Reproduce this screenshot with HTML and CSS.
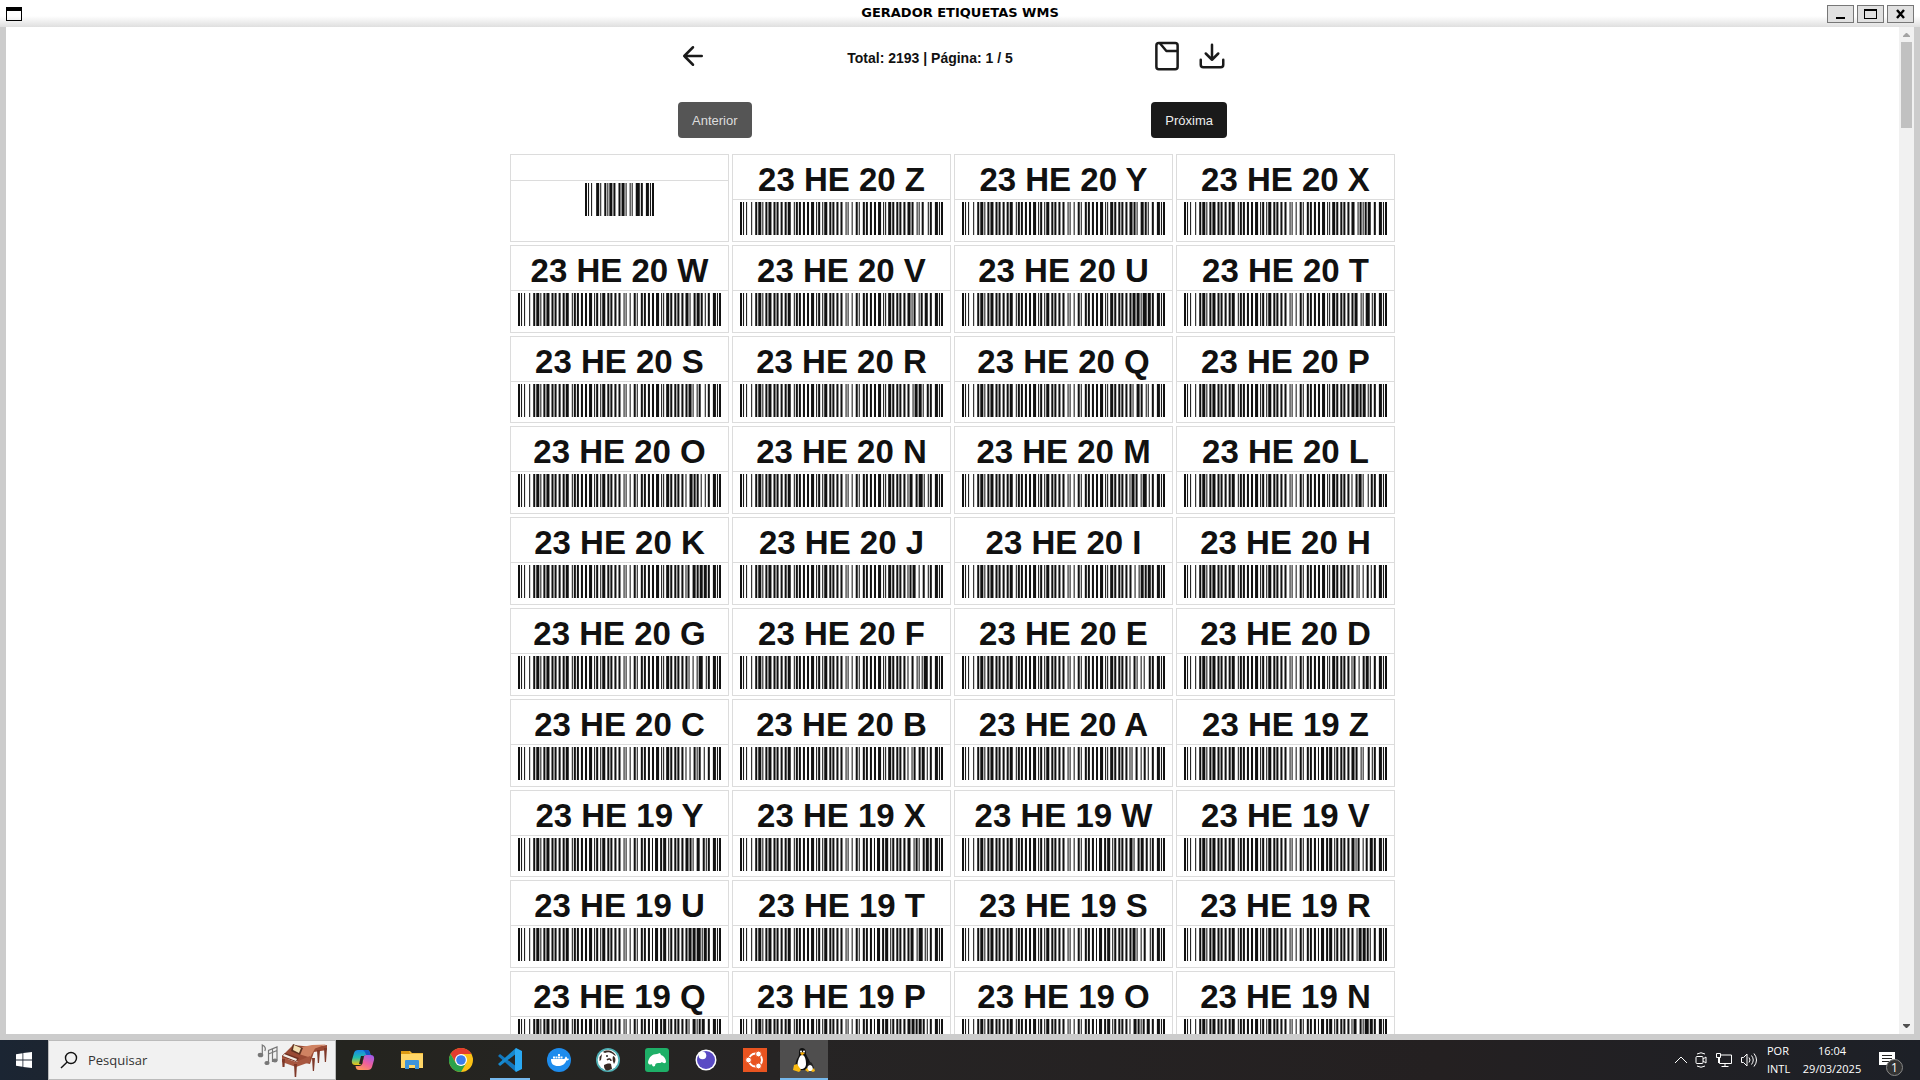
FILE: index.html
```html
<!DOCTYPE html>
<html lang="pt-BR">
<head>
<meta charset="utf-8">
<title>GERADOR ETIQUETAS WMS</title>
<link rel="stylesheet" href="styles.css">
</head>
<body>
<header class="titlebar">
  <svg class="app-icon" width="16" height="14" viewBox="0 0 16 14"><path d="M0 0h16v14H0zM1 4v9h14V4z" fill="#000" fill-rule="evenodd"/></svg>
  <h1 class="window-title">GERADOR ETIQUETAS WMS</h1>
  <div class="window-controls">
    <button class="win-btn" aria-label="Minimizar"><svg width="13" height="10" viewBox="0 0 13 10"><path d="M2 8h9v2H2z"/></svg></button>
    <button class="win-btn" aria-label="Maximizar"><svg width="13" height="10" viewBox="0 0 13 10"><path d="M0 0h13v10H0zM1 2v7h11V2z" fill-rule="evenodd"/></svg></button>
    <button class="win-btn" aria-label="Fechar"><svg width="13" height="10" viewBox="0 0 13 10"><path d="M3 1l7 8M10 1L3 9" stroke="#000" stroke-width="2.4"/></svg></button>
  </div>
</header>

<div class="window-body">
  <main class="viewport">
    <div class="toolbar">
      <button class="icon-btn" aria-label="Voltar"><svg class="line-icon" viewBox="0 0 24 24"><path d="M19 12H5M12 19l-7-7 7-7"/></svg></button>
      <p class="summary">Total: 2193 | Página: 1 / 5</p>
      <div class="toolbar-actions">
        <button class="icon-btn" aria-label="Documento"><svg class="line-icon" viewBox="0 0 24 24"><rect x="3.500" y="1.500" width="17" height="21" rx="2"/><path d="M6.500 2l5 6H20"/></svg></button>
        <button class="icon-btn" aria-label="Baixar"><svg class="line-icon" viewBox="0 0 24 24"><path d="M21 15v4a2 2 0 0 1-2 2H5a2 2 0 0 1-2-2v-4M7 10l5 5 5-5M12 15V3"/></svg></button>
      </div>
    </div>
    <nav class="pager" aria-label="Paginação">
      <button class="pager-btn pager-btn-off">Anterior</button>
      <button class="pager-btn">Próxima</button>
    </nav>
    <section class="labels" id="labels"></section>
  </main>
  <div class="scrollbar">
    <svg class="scroll-arrow" width="7" height="4" viewBox="0 0 7 4"><path d="M3 0h1l3 3v1H0V3z" fill="#a3a3a3"/></svg>
    <div class="scroll-track"><div class="scroll-thumb"></div></div>
    <svg class="scroll-arrow" width="7" height="4" viewBox="0 0 7 4"><path d="M0 0h7v1L4 4H3L0 1z" fill="#505050"/></svg>
  </div>
</div>

<footer class="taskbar">
  <button class="start" aria-label="Iniciar"><svg width="16" height="16" viewBox="0 0 16 16"><path d="M0 2.200L6.500 1.300V7.600H0zM7.300 1.100L16 0V7.600H7.300zM0 8.400H6.500V14.700L0 13.800zM7.300 8.400H16V16L7.300 14.900z" fill="#fff"/></svg></button>
  <div class="search">
    <svg width="18" height="18" viewBox="0 0 18 18" fill="none" stroke="#111" stroke-width="1.400"><circle cx="11" cy="7" r="5.500"/><path d="M7.200 11L1 17"/></svg>
    <input class="search-input" type="search" placeholder="Pesquisar" aria-label="Pesquisar">
    <svg width="72" height="36" viewBox="0 0 72 36">
      <g fill="#777" stroke="#777" stroke-width="1.200"><ellipse cx="3.500" cy="13" rx="2.200" ry="1.700"/><path d="M5.300 13V3c2 1 4 3 2.500 6" fill="none"/><ellipse cx="10" cy="21" rx="2" ry="1.500"/><ellipse cx="18" cy="18.500" rx="2" ry="1.500"/><path d="M11.500 21V8.500L20 5v13.500M15.500 20V7M11.500 12l8.500-3.500" fill="none"/></g>
      <path d="M25 14l11-11 20 2 14-2v5l-13 2-4 12-28-6z" fill="#9a4a34"/>
      <path d="M35 7l20-4 14-.5-11 4-5 9-13-4z" fill="#cf8262"/><path d="M28 11l14 5-3 4-14-6z" fill="#6e3022"/><path d="M27 12l13 5-1 2-13-5z" fill="#f5eee6"/>
      <path d="M36 2l10 4-3 7-9-4z" fill="#5d3120"/><path d="M37 3l7 3-2 5-6-3z" fill="#f2dfb3"/>
      <path d="M25 15l14 5 14-6v6l-14 5-14-5z" fill="#a75740"/>
      <path d="M25 17h3l-.5 8h-2zM37 22h3l-.8 13h-1.500zM55 16h3l-1 13h-1.200zM60 8h3l-1 13h-1.200zM67 6h3l-1 14h-1.200z" fill="#7f3929"/>
    </svg>
  </div>
  <nav class="apps" aria-label="Aplicativos">
    <button class="app" aria-label="Copilot"><svg width="24" height="24" viewBox="0 0 24 24"><defs><linearGradient id="ca" x2="0" y2="1"><stop stop-color="#1785e8"/><stop offset=".5" stop-color="#22bfae"/><stop offset="1" stop-color="#f1c40f"/></linearGradient><linearGradient id="cb" x1=".8" x2=".2" y2="1"><stop stop-color="#a05be8"/><stop offset=".5" stop-color="#ee5f9d"/><stop offset="1" stop-color="#ff9a56"/></linearGradient></defs><path d="M7 2h9c2 0 2.500 1 3 3l.5 2h-4c-2 0-2.500 1-3 3l-1 4c-.5 2-1.500 3-3.500 3H4c-3 0-3.500-3-3-5l2-7c.6-2 2-3 4-3z" fill="url(#ca)"/><path d="M12 2h4c2 0 2.500 1.500 3 3l1 3h-3.500c-2-1-2-3-2.500-4z" fill="#1257c4"/><path d="M15 7h5c3 0 3.500 3 3 5l-2 7c-.6 2-2 3-4 3H8c-2 0-3-1-3.500-4H8c2 0 3-1 3.500-3l1-5c.5-2 1-3 2.500-3z" fill="url(#cb)"/><path d="M10 8h3l-2 8H8z" fill="#24241f"/></svg></button>
    <button class="app" aria-label="Explorador"><svg width="24" height="24" viewBox="0 0 24 24"><path d="M1 3h9l2 2h11v15H1z" fill="#f0b93a"/><path d="M1 6h22v14H1z" fill="#ffd667"/><path d="M1 3h8l1 3H1z" fill="#dd9a12"/><path d="M5 13q0-1 1-1h12q1 0 1 1v8h-4v-4H9v4H5z" fill="#3d94dc"/></svg></button>
    <button class="app" aria-label="Chrome"><svg width="24" height="24" viewBox="0 0 24 24"><circle cx="12" cy="12" r="12" fill="#fbc116"/><path d="M1.600 6A12 12 0 0 1 22.400 6H12L7 15z" fill="#e33b2e"/><path d="M1.600 6A12 12 0 0 0 12 24l5.200-9-5.200 3-5.200-3z" fill="#2ba24c"/><circle cx="12" cy="12" r="6" fill="#fff"/><circle cx="12" cy="12" r="4.800" fill="#3b7ded"/></svg></button>
    <button class="app app-open" aria-label="VS Code"><svg width="24" height="24" viewBox="0 0 24 24"><path d="M0 8l2-2 17 13-1 5z" fill="#1277bd"/><path d="M0 16l2 2 17-13-1-5z" fill="#1689cf"/><path d="M18 0l6 3v18l-6 3-1-2V2z" fill="#2aa9f3"/></svg></button>
    <button class="app" aria-label="Docker"><svg width="24" height="24" viewBox="0 0 24 24"><circle cx="12" cy="12" r="12" fill="#1d8ced"/><path d="M4 11h13c1 0 1-2 2-2.500.8.500 1 1 1 2 1 0 1.500 0 2 .5-.5 1-1.500 1.500-2.700 1.500C18 16.500 15 18 11 18c-4.500 0-7-2-7-7zM6 8.500h2v2H6zM8.500 8.500h2v2h-2zM11 8.500h2v2h-2zM13.500 8.500h2v2h-2zM11 6h2v2h-2z" fill="#fff"/></svg></button>
    <button class="app" aria-label="DBeaver"><svg width="24" height="24" viewBox="0 0 24 24"><circle cx="12" cy="12" r="12" fill="#4fb0b5"/><circle cx="12" cy="12" r="10.300" fill="#fff"/><path d="M7 4c4-3 11-1 13 4l-2-1-1-1c-3-2-6-2-8-1zM3.500 9l2.500-3-1 6-1.500 1z" fill="#382923"/><path d="M8 17c2-1 5-2 7-1l1 5-4 1.500c-3 0-4-2-4-5.500z" fill="#382923"/><path d="M17 8c3 1 3 5 1 8-1-2-2-5-1-8z" fill="#382923"/><circle cx="11" cy="8" r="1" fill="#222"/><path d="M11 12c2-2 4-1 4 1" fill="none" stroke="#382923" stroke-width="1.500"/></svg></button>
    <button class="app" aria-label="MongoDB"><svg width="24" height="24" viewBox="0 0 24 24"><rect width="24" height="24" rx="3" fill="#1eaf67"/><path d="M3 14c1-5 4-8 9-8l3-1 1 2c3 1 5 4 5 7-1 2-3 1-4 0-1 1-2 1-4 1s-3 1-3 3c-2 1-3 0-3-2-1 1-4 1-4-2z" fill="#fff"/></svg></button>
    <button class="app" aria-label="Insomnia"><svg width="24" height="24" viewBox="0 0 24 24"><circle cx="12" cy="12" r="10.500" fill="#fff"/><circle cx="12" cy="12" r="9" fill="#5a4bc4"/><circle cx="8.500" cy="7.500" r="3.800" fill="#fff"/></svg></button>
    <button class="app" aria-label="Ubuntu"><svg width="24" height="24" viewBox="0 0 24 24"><path d="M0 0h24v24H0z" fill="#e95420"/><circle cx="12.500" cy="12" r="6.500" fill="none" stroke="#fff" stroke-width="2"/><g fill="#fff" stroke="#e95420"><circle cx="5.500" cy="12" r="2.900"/><circle cx="15.500" cy="6" r="2.900"/><circle cx="15.500" cy="18" r="2.900"/></g></svg></button>
    <button class="app app-open app-active" aria-label="Linux"><svg width="24" height="24" viewBox="0 0 24 24"><path d="M10 0c4 0 4 4 4 6 1 3 3 5 4 8 1 4-1 7-4 8H6c-3-2-3-5-2-8 1-4 3-5 3-8 0-3 0-6 3-6z" fill="#111"/><path d="M10 7c3 0 4 5 4 9 0 3-2 5-5 5-4 0-4-4-3-8 1-3 2-6 4-6z" fill="#fff"/><path d="M8 5l2-1 3 1-3 2.500z" fill="#f5a800"/><circle cx="9" cy="3.500" r="1" fill="#fff"/><circle cx="12" cy="3.500" r="1" fill="#fff"/><path d="M2 17l3-1 4 6-2 2-6-2z" fill="#f9b90f"/><path d="M18 14c2 0 3 3 4 6v3h-8l1-4c1-2 1-5 3-5z" fill="#222"/><path d="M18 17c2 0 3 2 3 6h-6c0-4 1-6 3-6z" fill="#fff"/><path d="M13 22l2-2 2 3-1 1zM19 23l3-3 1 3-2 1z" fill="#f9b90f"/></svg></button>
  </nav>
  <div class="tray">
    <div class="tray-icons">
      <svg width="14" height="16" viewBox="0 0 14 16"><path d="M1 11l6-6 6 6"/></svg>
      <svg width="13" height="16" viewBox="0 0 13 16"><rect x="1" y="4.500" width="7" height="7" rx="1"/><path d="M8 7l3-2v6L8 9M2 2q4-2.500 8 0M2 14q4 2.500 8 0"/></svg>
      <svg width="18" height="16" viewBox="0 0 18 16"><path d="M5 3h11.500v8.500H4.500V6M10 11.500V14M6.500 14.500h7M1.500 1.500h4v4h-4zM3.500 5.500V11"/></svg>
      <svg width="18" height="16" viewBox="0 0 18 16"><path d="M1.500 5.500h2L7 2v12l-3.500-3.500h-2zM9 5.500q2 2.500 0 5M11.500 3.500q3.500 4.500 0 9M14 1.500q5 6.500 0 13"/></svg>
    </div>
    <p class="tray-text tray-lang">POR<br>INTL</p>
    <p class="tray-text tray-clock">16:04<br>29/03/2025</p>
    <button class="notify" aria-label="Notificações"><svg width="16" height="16" viewBox="0 0 16 16"><path d="M0 0h16v13h-5l-3 3v-3H0z" fill="#fff" stroke="none"/><path d="M3 3.500h10M3 6.500h10M3 9.500h7" stroke="#222"/></svg><span class="badge">1</span></button>
  </div>
</footer>
<script src="labels.js"></script>
</body>
</html>
```
FILE: styles.css
```css
* { box-sizing: border-box; }

body {
  margin: 0;
  height: 100vh;
  display: flex;
  flex-direction: column;
  overflow: hidden;
  background: #fff;
  color: #111;
  font-family: "Liberation Sans", Arial, sans-serif;
}

button { border: 0; padding: 0; background: none; font: inherit; color: inherit; }
h1, h2, p { margin: 0; }
svg { display: block; flex: none; }

/* Window frame */
.titlebar {
  flex: none;
  height: 27px;
  display: grid;
  grid-template-columns: 1fr auto 1fr;
  align-items: center;
  padding: 0 6px;
  background: linear-gradient(#fff 16px, #dfdfdf);
}
.window-title {
  font: bold 13px/24px "DejaVu Sans", sans-serif;
  padding-bottom: 2px;
  color: #000;
}
.window-controls { display: flex; justify-content: flex-end; gap: 3px; }
.win-btn {
  width: 27px;
  height: 18px;
  display: grid;
  place-items: center;
  background: #e1e1e1;
  border: 1px solid #777;
}
.window-body {
  flex: 1;
  min-height: 0;
  display: flex;
  border: solid #ccc;
  border-width: 0 6px 6px;
}
.viewport { flex: 1; min-width: 0; overflow: hidden; }

.scrollbar {
  width: 15px;
  display: flex;
  flex-direction: column;
  align-items: center;
  padding: 6px 2px;
  gap: 5px;
  background: #f1f1f1;
}
.scroll-track { flex: 1; width: 100%; }
.scroll-thumb { height: 88px; max-height: 100%; background: #c1c1c1; }
.scroll-thumb { height: 86px; }

/* Page header */
.toolbar, .pager {
  max-width: 549px;
  margin: 0 auto;
  display: flex;
  justify-content: space-between;
}
.toolbar { padding-top: 14px; align-items: center; }
.toolbar-actions { display: flex; gap: 15px; }
.line-icon {
  width: 30px;
  height: 30px;
  fill: none;
  stroke: #1a1a1a;
  stroke-width: 2;
  stroke-linecap: round;
  stroke-linejoin: round;
}
.summary { font-size: 14px; font-weight: bold; line-height: 20px; padding-top: 4px; }
.pager { padding: 31px 0 16px; }
.pager-btn {
  height: 36px;
  padding: 0 14px;
  border-radius: 4px;
  background: #1a1a1a;
  color: #eee;
  font-size: 13px;
}
.pager-btn-off { background: #555; color: #ddd; }

/* Label sheet */
.labels {
  max-width: 885px;
  margin: 0 auto;
  display: grid;
  grid-template-columns: repeat(4, 1fr);
  gap: 3px;
}
.label { aspect-ratio: 212 / 85; border: 1px solid #dcdcdc; }
.label-title {
  min-height: 26px;
  padding-top: 5px;
  border-bottom: 1px solid #dcdcdc;
  font-size: 33px;
  line-height: 39px;
  text-align: center;
  white-space: nowrap;
}
.barcode { margin: 2px auto 0; height: 33px; fill: #111; }

/* Taskbar */
.taskbar {
  flex: none;
  height: 40px;
  display: flex;
  background: linear-gradient(90deg, #1b2533, #24241f 18%, #262424 40%, #242021 75%, #1d2027);
  color: #fff;
}
.start { width: 48px; display: grid; place-items: center; }
.search {
  width: 288px;
  display: flex;
  align-items: center;
  gap: 10px;
  padding: 0 6px 0 11px;
  background: #f1f1f1;
  border: 1px solid #bbb;
}
.search-input {
  flex: 1;
  min-width: 0;
  border: 0;
  padding: 0;
  background: none;
  font: 13px "Open Sans", sans-serif;
}
.search-input::placeholder { color: #333; opacity: 1; }
.apps { display: flex; gap: 1px; padding-left: 3px; }
.app { width: 48px; display: grid; place-items: center; position: relative; }
.app-open::after {
  content: "";
  position: absolute;
  inset: auto 4px 0;
  height: 2px;
  background: #76b9ed;
}
.app-active { background: #4f4e4e; }
.app-active::after { inset: auto 0 0; }
.tray {
  margin-left: auto;
  display: flex;
  align-items: center;
  padding-right: 16px;
}
.tray-icons { display: flex; gap: 7px; margin-right: 9px; }
.tray-icons svg { fill: none; stroke: #fff; stroke-width: 1; }
.tray-text {
  font: 11px/18px "Open Sans", sans-serif;
  text-align: center;
}
.tray-lang { width: 24px; text-align: left; }
.tray-clock { width: 60px; margin: 0 17px 0 11px; }
.notify { position: relative; width: 25px; }
.badge {
  position: absolute;
  left: 7px;
  top: 7px;
  width: 17px;
  height: 17px;
  border: 1px solid #888;
  border-radius: 50%;
  background: #333;
  font: 12px/15px "Open Sans", sans-serif;
  text-align: center;
}
```
FILE: labels.js
```js
// Code 128 bar/space widths, indexed by symbol value.
const PATTERNS = ("212222 222122 222221 121223 121322 131222 122213 122312 132212 221213 " +
  "221312 231212 112232 122132 122231 113222 123122 123221 223211 221132 221231 213212 " +
  "223112 312131 311222 321122 321221 312212 322112 322211 212123 212321 232121 111323 " +
  "131123 131321 112313 132113 132311 211313 231113 231311 112133 112331 132131 113123 " +
  "113321 133121 313121 211331 231131 213113 213311 213131 311123 311321 331121 312113 " +
  "312311 332111 314111 221411 431111 111224 111422 121124 121421 141122 141221 112214 " +
  "112412 122114 122411 142112 142211 241211 221114 413111 241112 134111 111242 121142 " +
  "121241 114212 124112 124211 411212 421112 421211 212141 214121 412121 111143 111341 " +
  "131141 114113 114311 411113 411311 113141 114131 311141 411131 211412 211214 211232 2331112").split(" ");
const START_B = 104;
const STOP = 106;

function barcode(text) {
  const values = [...text].map(c => c.charCodeAt(0) - 32);
  const check = values.reduce((sum, v, i) => sum + v * (i + 1), START_B) % 103;
  let x = 0;
  let path = "";
  for (const value of [START_B, ...values, check, STOP]) {
    [...PATTERNS[value]].forEach((w, i) => {
      if (i % 2 === 0) path += `M${x} 0h${w}v1h-${w}z`;
      x += Number(w);
    });
  }
  const width = Math.round(x * 1.015);
  return `<svg class="barcode" width="${width}" viewBox="0 0 ${x} 1" preserveAspectRatio="none"><path d="${path}"/></svg>`;
}

const labels = [{ title: "", code: "WMS" }];
for (const level of ["20", "19"]) {
  for (const slot of "ZYXWVUTSRQPONMLKJIHGFEDCBA") {
    labels.push({ title: `23 HE ${level} ${slot}`, code: `L- T 23 HE ${level} ${slot}` });
  }
}

document.getElementById("labels").innerHTML = labels.slice(0, 40)
  .map(l => `<article class="label"><h2 class="label-title">${l.title}</h2>${barcode(l.code)}</article>`)
  .join("");
```
